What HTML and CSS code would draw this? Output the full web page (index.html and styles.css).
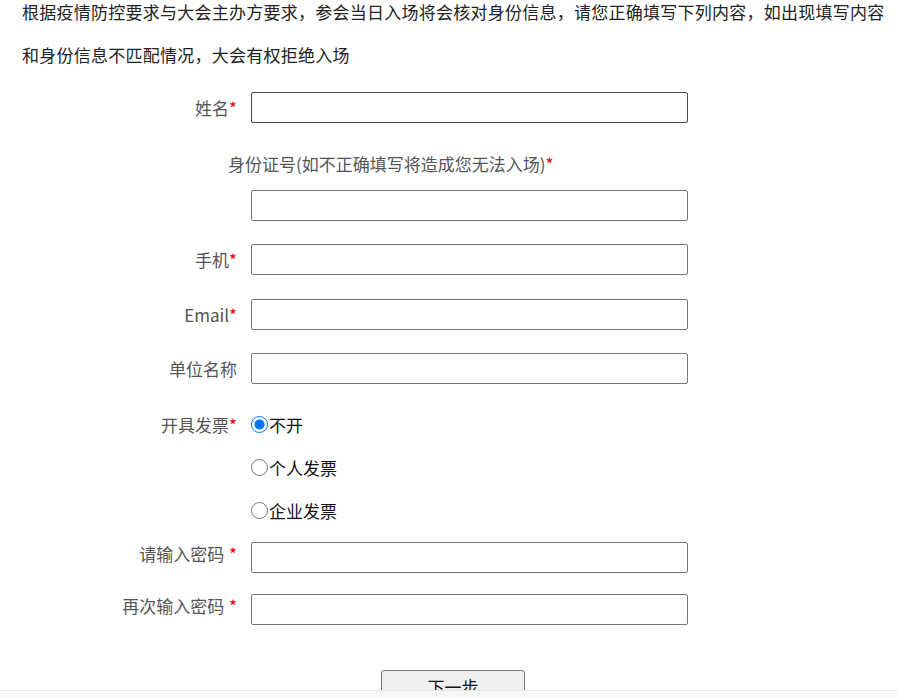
FILE: index.html
```html
<!DOCTYPE html>
<html lang="zh-CN">
<head>
<meta charset="utf-8">
<title>报名信息</title>
<link rel="stylesheet" href="styles.css">
</head>
<body>
<p class="intro">根据疫情防控要求与大会主办方要求，参会当日入场将会核对身份信息，请您正确填写下列内容，如出现填写内容和身份信息不匹配情况，大会有权拒绝入场</p>
<form class="form">
  <div class="row r-name">
    <label class="lbl">姓名<span class="req">*</span></label>
    <input class="field field-dark" type="text">
  </div>
  <div class="id-label">身份证号(如不正确填写将造成您无法入场)<span class="req">*</span></div>
  <div class="row r-id">
    <span class="lbl"></span>
    <input class="field" type="text">
  </div>
  <div class="row r-phone">
    <label class="lbl">手机<span class="req">*</span></label>
    <input class="field" type="text">
  </div>
  <div class="row r-email">
    <label class="lbl">Email<span class="req">*</span></label>
    <input class="field" type="text">
  </div>
  <div class="row r-org">
    <label class="lbl">单位名称</label>
    <input class="field" type="text">
  </div>
  <div class="row r-invoice">
    <span class="lbl lbl-top">开具发票<span class="req">*</span></span>
    <div class="options">
      <label class="opt"><input type="radio" name="inv" checked>不开</label>
      <label class="opt"><input type="radio" name="inv">个人发票</label>
      <label class="opt"><input type="radio" name="inv">企业发票</label>
    </div>
  </div>
  <div class="row r-pwd">
    <label class="lbl lbl-raised">请输入密码 <span class="req">*</span></label>
    <input class="field" type="password">
  </div>
  <div class="row r-pwd2">
    <label class="lbl lbl-raised">再次输入密码 <span class="req">*</span></label>
    <input class="field" type="password">
  </div>
  <div class="actions">
    <button type="button" class="btn">下一步</button>
  </div>
</form>
<div class="bottom-bar"></div>
</body>
</html>
```

FILE: styles.css
```css
html {
  overflow: hidden;
}
body {
  margin: 0;
  background: #fff;
  font-family: "Noto Sans CJK SC", "Noto Sans", sans-serif;
  font-size: 17px;
  color: #222;
}
.intro {
  margin: -10px 0 0 0;
  padding: 0 0 0 22px;
  line-height: 43px;
  letter-spacing: 0.25px;
  color: #222;
}
.form {
  display: flex;
  flex-direction: column;
  margin: 0;
}
.row {
  display: grid;
  grid-template-columns: 237px 437px;
  column-gap: 14px;
  align-items: center;
}
.lbl {
  text-align: right;
  color: #555;
  line-height: 31px;
  white-space: nowrap;
}
.lbl-top {
  align-self: start;
  line-height: 43px;
}
.lbl-raised {
  align-self: start;
  line-height: 23px;
  word-spacing: 1px;
}
.req {
  color: #e60000;
}
.field {
  box-sizing: border-box;
  width: 437px;
  height: 31px;
  margin: 0;
  border: 1px solid #767676;
  border-radius: 2px;
  background: #fff;
  font: inherit;
  padding: 0 4px;
}
.field-dark {
  border-color: #4a4a4a;
}
.r-name { margin-top: 16px; }
.id-label {
  margin-top: 29px;
  padding-left: 228px;
  line-height: 24px;
  color: #555;
}
.r-id { margin-top: 14px; }
.r-phone { margin-top: 23px; }
.r-email { margin-top: 24px; }
.r-org { margin-top: 23px; }
.r-invoice { margin-top: 19px; }
.options {
  display: flex;
  flex-direction: column;
}
.opt {
  display: flex;
  align-items: center;
  height: 43px;
  color: #111;
}
.opt input {
  width: 17px;
  height: 17px;
  margin: 0 1px 0 0;
}
.r-pwd { margin-top: 10px; }
.r-pwd2 { margin-top: 21px; }
.actions {
  margin-top: 45px;
  padding-left: 381px;
}
.btn {
  box-sizing: border-box;
  width: 144px;
  height: 32px;
  border: 1px solid #767676;
  border-radius: 3px;
  background: #efefef;
  font: inherit;
  color: #111;
  padding: 0;
}
.bottom-bar {
  position: fixed;
  left: 0;
  right: 0;
  bottom: 0;
  height: 7px;
  background: #f7f7f7;
  border-top: 1px solid #e8e8e8;
}
```
